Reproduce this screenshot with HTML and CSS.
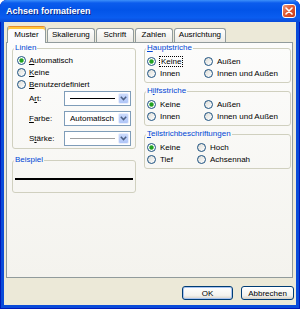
FILE: index.html
```html
<!DOCTYPE html>
<html>
<head>
<meta charset="utf-8">
<title>Achsen formatieren</title>
<link rel="stylesheet" href="styles.css">
</head>
<body>

<div class="window">

    <div class="titlebar">
        <span class="title">Achsen formatieren</span>
        <span class="close">
            <svg width="8" height="8" viewBox="0 0 8 8"><path d="M1 1 L7 7 M7 1 L1 7" stroke="#fff" stroke-width="1.6" stroke-linecap="round"/></svg>
        </span>
    </div>

    <div class="client">

        <div class="tabs">
            <div class="tab active">Muster</div>
            <div class="tab">Skalierung</div>
            <div class="tab">Schrift</div>
            <div class="tab">Zahlen</div>
            <div class="tab">Ausrichtung</div>
        </div>

        <div class="panel">

            <div class="col">
                <fieldset class="group">
                    <legend>Linien</legend>
                    <div class="gbody lines">
                        <div class="opt"><span class="radio on"></span><span><u>A</u>utomatisch</span></div>
                        <div class="opt"><span class="radio"></span><span><u>K</u>eine</span></div>
                        <div class="opt"><span class="radio"></span><span><u>B</u>enutzerdefiniert</span></div>

                        <div class="field first">
                            <span class="flabel">A<u>r</u>t:</span>
                            <div class="combo">
                                <span class="combo-val"><span class="sample thick"></span></span>
                                <span class="combo-btn"><svg width="7" height="5" viewBox="0 0 7 5"><path d="M0.8 0.8 L3.5 3.6 L6.2 0.8" fill="none" stroke="#4d6185" stroke-width="1.5"/></svg></span>
                            </div>
                        </div>
                        <div class="field">
                            <span class="flabel"><u>F</u>arbe:</span>
                            <div class="combo">
                                <span class="combo-val">Automatisch</span>
                                <span class="combo-btn"><svg width="7" height="5" viewBox="0 0 7 5"><path d="M0.8 0.8 L3.5 3.6 L6.2 0.8" fill="none" stroke="#4d6185" stroke-width="1.5"/></svg></span>
                            </div>
                        </div>
                        <div class="field">
                            <span class="flabel">S<u>t</u>ärke:</span>
                            <div class="combo">
                                <span class="combo-val"><span class="sample thin"></span></span>
                                <span class="combo-btn"><svg width="7" height="5" viewBox="0 0 7 5"><path d="M0.8 0.8 L3.5 3.6 L6.2 0.8" fill="none" stroke="#4d6185" stroke-width="1.5"/></svg></span>
                            </div>
                        </div>
                    </div>
                </fieldset>

                <fieldset class="group example">
                    <legend>Beispiel</legend>
                    <div class="gbody">
                        <div class="example-line"></div>
                    </div>
                </fieldset>
            </div>

            <div class="col">
                <fieldset class="group">
                    <legend><u>H</u>auptstriche</legend>
                    <div class="gbody options">
                        <div class="opt"><span class="radio on"></span><span class="focus">Keine</span></div>
                        <div class="opt"><span class="radio"></span><span>Außen</span></div>
                        <div class="opt"><span class="radio"></span><span>Innen</span></div>
                        <div class="opt"><span class="radio"></span><span>Innen und Außen</span></div>
                    </div>
                </fieldset>

                <fieldset class="group">
                    <legend>H<u>i</u>lfsstriche</legend>
                    <div class="gbody options">
                        <div class="opt"><span class="radio on"></span><span>Keine</span></div>
                        <div class="opt"><span class="radio"></span><span>Außen</span></div>
                        <div class="opt"><span class="radio"></span><span>Innen</span></div>
                        <div class="opt"><span class="radio"></span><span>Innen und Außen</span></div>
                    </div>
                </fieldset>

                <fieldset class="group">
                    <legend><u>T</u>eilstrichbeschriftungen</legend>
                    <div class="gbody options narrow">
                        <div class="opt"><span class="radio on"></span><span>Keine</span></div>
                        <div class="opt"><span class="radio"></span><span>Hoch</span></div>
                        <div class="opt"><span class="radio"></span><span>Tief</span></div>
                        <div class="opt"><span class="radio"></span><span>Achsennah</span></div>
                    </div>
                </fieldset>
            </div>

        </div>

        <div class="footer">
            <button class="btn default">OK</button>
            <button class="btn">Abbrechen</button>
        </div>

    </div>
</div>

</body>
</html>
```

FILE: styles.css
```css
html, body {
    margin: 0;
    padding: 0;
    font-family: "Liberation Sans", Arial, sans-serif;
    font-size: 8px;
    color: #000;
    background: #fff;
}

.window {
    width: 300px;
    height: 309px;
    box-sizing: border-box;
    display: flex;
    flex-direction: column;
    background: #0a4bd9;
    border-radius: 7px 7px 0 0;
    box-shadow: inset 1px 0 #0019b8, inset -1px 0 #0019b8, inset 0 -1px #0019b8;
}

/* title bar */
.titlebar {
    height: 22px;
    flex: none;
    display: flex;
    align-items: center;
    padding: 0 4px 0 6px;
    border-radius: 7px 7px 0 0;
    background: linear-gradient(#3d90fa 0, #0b5ced 3px, #0254e8 45%, #0a5df0 80%, #0a4bd9 100%);
}

.title {
    color: #fff;
    font-weight: bold;
    font-size: 9px;
    text-shadow: 1px 1px #0c2a8a;
}

.close {
    margin-left: auto;
    width: 14px;
    height: 14px;
    box-sizing: border-box;
    border: 1px solid #fff;
    border-radius: 3px;
    background: linear-gradient(135deg, #f09b7c 0%, #e05a33 45%, #c53a1a 100%);
    display: flex;
    align-items: center;
    justify-content: center;
}

/* client area */
.client {
    flex: 1;
    margin: 0 4px 4px;
    background: #ece9d8;
    display: flex;
    flex-direction: column;
    padding-top: 4px;
}

.tabs {
    height: 16px;
    display: flex;
    align-items: flex-end;
    padding-left: 3px;
}

.tab {
    height: 14px;
    min-width: 38px;
    box-sizing: border-box;
    padding: 0 4px;
    line-height: 12px;
    text-align: center;
    border: 1px solid #919b9c;
    border-bottom: none;
    border-radius: 3px 3px 0 0;
    background: linear-gradient(#ffffff, #ecebe6);
    margin-left: 1px;
}

.tab.active {
    margin-left: 0;
    height: 17px;
    min-width: 39px;
    padding-top: 2px;
    margin-bottom: -1px;
    position: relative;
    z-index: 1;
    border-top-color: #e68b2c;
    background: #fcfcfe;
    box-shadow: inset 0 2px 0 #ffc73c;
}

.panel {
    flex: none;
    height: 236px;
    box-sizing: border-box;
    margin: 0 3px 0 2px;
    border: 1px solid #919b9c;
    background: linear-gradient(#fcfcfb, #f4f3ee);
    padding: 0 1px 0 5px;
    display: grid;
    grid-template-columns: 124px 147px;
    column-gap: 8px;
    align-items: start;
}

/* group boxes */
.group {
    margin: 0;
    padding: 0;
    min-width: 0;
    border: 1px solid #d0d0bf;
    border-radius: 3px;
}

.group + .group {
    margin-top: 3px;
}

.group legend {
    padding: 0 1px;
    margin-left: 1px;
    line-height: 10px;
    color: #0046d5;
}

.gbody {
    padding: 2px 0 3px 2px;
}

.lines {
    padding: 1px 0 2px 4px;
}

.opt {
    height: 12px;
    display: flex;
    align-items: center;
}

.radio {
    width: 9px;
    height: 9px;
    box-sizing: border-box;
    flex: none;
    border: 1px solid #1c5180;
    border-radius: 50%;
    background: linear-gradient(135deg, #dcdcd6, #ffffff);
    margin-right: 4px;
}

.lines .radio {
    margin-right: 3px;
}

.radio.on {
    background: radial-gradient(circle, #21a121 0, #21a121 1.6px, #8fd08f 2.2px, #ffffff 2.8px);
}

.focus {
    outline: 1px dotted #000;
    padding: 0 1px;
}

.options {
    display: grid;
    grid-template-columns: 57px auto;
}

.options.narrow {
    grid-template-columns: 50px auto;
}

/* fields with combo boxes */
.field {
    display: flex;
    align-items: center;
    margin: 5px 0 0 12px;
}

.field.first {
    margin-top: 1px;
}

.flabel {
    width: 35px;
}

.combo {
    width: 67px;
    height: 15px;
    box-sizing: border-box;
    border: 1px solid #7f9db9;
    background: #fff;
    display: flex;
    padding: 1px;
}

.combo-val {
    flex: 1;
    display: flex;
    align-items: center;
    padding-left: 4px;
}

.combo-btn {
    width: 11px;
    border: 1px solid #e8eefd;
    border-radius: 2px;
    box-sizing: border-box;
    background: linear-gradient(#c9d9fc, #b0c6f7);
    display: flex;
    align-items: center;
    justify-content: center;
}

.sample {
    display: block;
    width: 45px;
}

.sample.thick {
    height: 1px;
    background: #000;
}

.sample.thin {
    height: 1px;
    background: #a0a0a0;
}

.example {
    margin-top: 6px !important;
}

.example .gbody {
    padding: 13px 2px 12px 2px;
}

.example-line {
    height: 2px;
    background: #000;
}

/* buttons */
.footer {
    flex: 1;
    display: flex;
    justify-content: flex-end;
    align-items: flex-start;
    gap: 8px;
    padding: 8px 2px 0 0;
}

.btn {
    height: 14px;
    width: 51px;
    padding: 0;
    font-family: "Liberation Sans", Arial, sans-serif;
    font-size: 8px;
    color: #000;
    border: 1px solid #003c74;
    border-radius: 3px;
    background: linear-gradient(#ffffff, #f3f2ee 70%, #d6d0c5);
}

.btn + .btn {
    width: 53px;
}

.btn.default {
    box-shadow: inset 0 0 0 1px #a8c3ef;
}
```
